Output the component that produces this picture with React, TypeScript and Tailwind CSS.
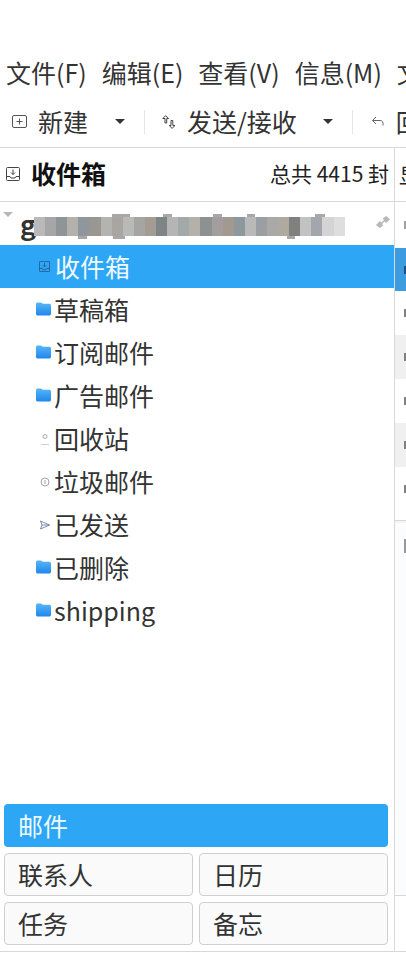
import React from "react";

// tiny glyphs from the mail client's icon theme
function InboxIcon({ className = "" }: { className?: string }) {
  return (
    <svg viewBox="0 0 14 14" className={className} fill="none" stroke="currentColor" strokeWidth="1">
      <rect x="0.5" y="0.5" width="13" height="13" rx="1" />
      <path d="M0.5 9.5h3.5l1 1.5h4l1-1.5h3.5" />
      <path d="M7 2.5v5M5 5.5l2 2 2-2" />
    </svg>
  );
}

function Folder() {
  return (
    <svg viewBox="0 0 15 14" className="w-[15px] h-[14px] shrink-0 -mt-[2px]">
      <defs>
        <linearGradient id="folderFill" x1="0" y1="0" x2="0" y2="1">
          <stop offset="0" stopColor="#58b6f5" />
          <stop offset="1" stopColor="#1f86ee" />
        </linearGradient>
      </defs>
      <path d="M0 2.2C0 1 .7.5 1.6.5h3.2c.8 0 1.2.8 2 1.2h6.400c1 0 1.800.6 1.800 1.800v8.200c0 1-.7 1.800-1.800 1.800H1.800C.7 13.500 0 12.700 0 11.700z" fill="url(#folderFill)" />
    </svg>
  );
}

function TrashIcon() {
  return (
    <svg viewBox="0 0 15 14" className="w-[15px] h-[14px] shrink-0" fill="none">
      <circle cx="9" cy="4.500" r="2" stroke="#a8a8a8" />
      <path d="M5 12.500h8" stroke="#d0d0d0" />
    </svg>
  );
}

function JunkIcon() {
  return (
    <svg viewBox="0 0 15 14" className="w-[15px] h-[14px] shrink-0" fill="none">
      <circle cx="9" cy="7" r="4" stroke="#8a8a8a" strokeWidth="0.8" />
      <path d="M9 5v4" stroke="#8a8a8a" strokeWidth="0.8" />
    </svg>
  );
}

function SentIcon() {
  return (
    <svg viewBox="0 0 15 14" className="w-[15px] h-[14px] shrink-0" fill="none">
      <path d="M4.500 3l9 4-9 4 1.500-4zM6 7h7.500" stroke="#6d7ea8" strokeWidth="0.9" />
    </svg>
  );
}

const mosaic = ["#b9b9b9","#a6a6a6","#8f9596","#b4b0ab","#8f979c","#9a9692","#b3b3b1","#a9a5a0","#b9b9b7","#a7a5a4","#a39c92","#7f8486","#b5b5b5","#a3a8a9","#b4b1ab","#8d9192","#a19e9d","#a29a90","#8d989c","#b9b9b9","#9b9ea2","#aaa9a8","#b0a9a0","#80807e","#c2c2c2","#a3a7ad","#d4d4d4","#dedede"];

// bits of the hidden address that stick out of the mosaic
const scraps = [
  { left: 112, top: 12, width: 18 },
  { left: 163, top: 12, width: 9 },
  { left: 213, top: 12, width: 9 },
  { left: 247, top: 12, width: 8 },
  { left: 315, top: 12, width: 10 },
  { left: 78, top: 34, width: 9 },
  { left: 113, top: 34, width: 12 },
  { left: 287, top: 34, width: 8 },
];

const folders = [
  { label: "草稿箱", icon: <Folder /> },
  { label: "订阅邮件", icon: <Folder /> },
  { label: "广告邮件", icon: <Folder /> },
  { label: "回收站", icon: <TrashIcon /> },
  { label: "垃圾邮件", icon: <JunkIcon /> },
  { label: "已发送", icon: <SentIcon /> },
  { label: "已删除", icon: <Folder /> },
  { label: "shipping", icon: <Folder /> },
];

const rows = ["bg-white", "bg-[#f0f0f0]", "bg-white", "bg-[#f0f0f0]", "bg-white"];

export default function App() {
  return (
    <div className="w-[406px] h-[957px] overflow-hidden bg-white flex flex-col text-[#333333] font-['Noto_Sans_CJK_SC','Noto_Sans',sans-serif]">
      {/* Menu bar */}
      <div className="h-[98px] pt-[46px] pl-[6px] flex gap-[15px] items-center text-[25px] leading-none whitespace-nowrap overflow-hidden shrink-0">
        <span>文件(F)</span>
        <span>编辑(E)</span>
        <span>查看(V)</span>
        <span>信息(M)</span>
        <span>文</span>
      </div>

      {/* Toolbar */}
      <div className="h-[50px] pb-[2px] flex items-center text-[25px] leading-none whitespace-nowrap overflow-hidden border-b border-[#d8d8d8] shrink-0">
        <svg viewBox="0 0 15 13" className="w-[15px] h-[13px] ml-[12px] text-[#555] shrink-0" fill="none" stroke="currentColor">
          <rect x="0.5" y="0.5" width="14" height="12" rx="1.500" />
          <path d="M7.500 3.500v6M4.500 6.500h6" />
        </svg>
        <span className="ml-[11px]">新建</span>
        <span className="ml-[27px] w-0 h-0 shrink-0 border-x-[5px] border-x-transparent border-t-[5px] border-t-[#333]" />
        <span className="ml-[19px] w-px h-[24px] bg-[#e6e6e6] shrink-0" />
        <svg viewBox="0 0 14 14" className="w-[14px] h-[14px] ml-[17px] text-[#444] shrink-0" fill="none" stroke="currentColor" strokeWidth="1">
          <path d="M3 8V3.500H.8L3.700.6l2.900 2.900H4.700V8zM9 5.500v5H7.200l2.900 2.900 2.900-2.900h-2.200v-5z" />
        </svg>
        <span className="ml-[11px]">发送/接收</span>
        <span className="ml-[26px] w-0 h-0 shrink-0 border-x-[5px] border-x-transparent border-t-[5px] border-t-[#333]" />
        <span className="ml-[19px] w-px h-[24px] bg-[#e6e6e6] shrink-0" />
        <svg viewBox="0 0 14 12" className="w-[14px] h-[12px] ml-[18px] text-[#666] shrink-0" fill="none" stroke="currentColor">
          <path d="M5 1L1.500 4.500 5 8M1.500 4.500H9c2.500 0 3.500 2 3 5" />
        </svg>
        <span className="ml-[11px]">回</span>
      </div>

      <div className="h-[804px] border-b border-[#d8d8d8] flex shrink-0">
        {/* Folder pane */}
        <div className="w-[395px] shrink-0 border-r border-[#d8d8d8] flex flex-col">
          <div className="h-[54px] pb-[2px] flex items-center border-b border-[#d8d8d8] shrink-0">
            <InboxIcon className="w-[14px] h-[14px] ml-[6px] text-[#444] shrink-0" />
            <span className="ml-[11px] text-[25px] font-bold text-[#111]">收件箱</span>
            <span className="ml-auto mr-[5px] text-[21px] text-[#222]">总共 4415 封</span>
          </div>

          <div className="h-[43px] relative flex items-center shrink-0">
            <span className="absolute left-[3px] top-[10px] w-0 h-0 border-x-[5px] border-x-transparent border-t-[5px] border-t-[#b8b8b8]" />
            <span className="ml-[20px] text-[27px] font-bold text-[#333] leading-none">g</span>
            {scraps.map((s) => (
              <span
                key={s.left}
                className="absolute h-[3px] bg-[#a8a8a8]"
                style={{ left: s.left, top: s.top, width: s.width }}
              />
            ))}
            <div className="absolute left-[34px] top-[15px] flex h-[19px]">
              {mosaic.map((c, i) => (
                <span key={i} className="w-[11.100px] h-full" style={{ background: c }} />
              ))}
            </div>
            <svg viewBox="0 0 16 14" className="absolute right-[3px] top-[13px] w-[16px] h-[14px] text-[#b8b8b8]" fill="currentColor">
              <path d="M1 10l4-4 1.500 1.500L9 5 7.500 3.500 11.500 1 15 4.500 11 8 9.500 6.500 7 9l1.500 1.500L4.500 13z" />
            </svg>
          </div>

          <div className="h-[43px] bg-[#2ea6f6] flex items-center text-[25px] text-[#eef9ff] shrink-0">
            <InboxIcon className="w-[11px] h-[11px] ml-[39px] mr-[5px] text-[#22527d] shrink-0" />
            收件箱
          </div>

          {folders.map((f) => (
            <div key={f.label} className="h-[43px] flex items-center text-[25px] shrink-0">
              <span className="ml-[36px] mr-[3px] flex">{f.icon}</span>
              {f.label}
            </div>
          ))}

          {/* Switcher */}
          <div className="mt-auto pl-[4px] pr-[6px] pb-[6px] flex flex-col gap-[6px] text-[25px] leading-none">
            <div className="h-[43px] rounded-[4px] bg-[#2ea6f6] text-[#eef9ff] flex items-center pl-[14px]">邮件</div>
            <div className="grid grid-cols-2 gap-x-[6px] gap-y-[6px]">
              {["联系人", "日历", "任务", "备忘"].map((t) => (
                <div key={t} className="h-[43px] rounded-[4px] border border-[#cfcfcf] bg-[#fafafa] flex items-center pl-[13px]">
                  {t}
                </div>
              ))}
            </div>
          </div>
        </div>

        {/* Clipped message list */}
        <div className="flex-1 min-w-0 flex flex-col overflow-hidden">
          <div className="h-[54px] border-b border-[#d8d8d8] flex items-center text-[21px] text-[#222] pl-[4px] whitespace-nowrap shrink-0">显</div>
          <div className="h-[46px] bg-white flex items-center pl-[9px] shrink-0">
            <span className="w-[2px] h-[8px] bg-[#a0a0a0]" />
          </div>
          <div className="h-[43px] bg-[#3d9be0] flex items-center pl-[9px] shrink-0">
            <span className="w-[2px] h-[8px] bg-[#20507a]" />
          </div>
          {rows.map((bg, i) => (
            <div key={i} className={`h-[44px] flex items-center pl-[9px] shrink-0 ${bg}`}>
              <span className="w-[2px] h-[8px] bg-[#808080]" />
            </div>
          ))}
          <div className="h-[9px] shrink-0" />
          <div className="h-[3px] border-t border-[#d8d8d8] bg-[#f4f4f4] shrink-0" />
          <div className="h-[373px] pl-[9px] pt-[16px] bg-[#fbfcfe] border-b border-[#d8d8d8] shrink-0">
            <span className="block w-[2px] h-[14px] bg-[#999]" />
          </div>
        </div>
      </div>
    </div>
  );
}
